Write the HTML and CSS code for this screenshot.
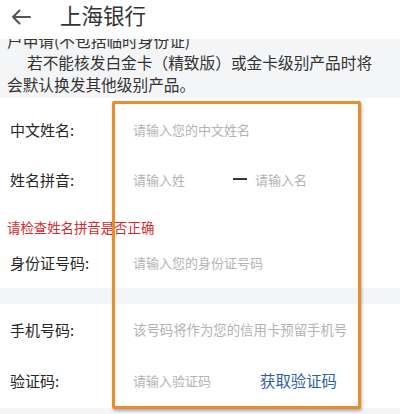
FILE: index.html
```html
<!DOCTYPE html>
<html lang="zh">
<head>
<meta charset="utf-8">
<link rel="stylesheet" href="styles.css">
</head>
<body>
<div class="page">
  <header class="header">
    <svg class="back" width="20" height="16" viewBox="0 0 20 16"><path d="M19 8H2M8.5 1.5L2 8l6.5 6.5" fill="none" stroke="#555" stroke-width="2" stroke-linecap="round" stroke-linejoin="round"/></svg>
    <span class="title">上海银行</span>
  </header>
  <div class="notice">
    <div class="notice-inner">
      <p class="line">户申请(不包括临时身份证)</p>
      <p class="line indent">若不能核发白金卡（精致版）或金卡级别产品时将</p>
      <p class="line">会默认换发其他级别产品。</p>
    </div>
  </div>
  <div class="form">
    <div class="row row-first">
      <span class="label">中文姓名:</span>
      <span class="ph">请输入您的中文姓名</span>
    </div>
    <div class="row">
      <span class="label">姓名拼音:</span>
      <span class="ph ph-last">请输入姓</span>
      <span class="dash"></span>
      <span class="ph">请输入名</span>
    </div>
    <div class="warn">请检查姓名拼音是否正确</div>
    <div class="row row-id">
      <span class="label">身份证号码:</span>
      <span class="ph">请输入您的身份证号码</span>
    </div>
    <div class="band"></div>
    <div class="row">
      <span class="label">手机号码:</span>
      <span class="ph ph-wide">该号码将作为您的信用卡预留手机号</span>
    </div>
    <div class="row row-last">
      <span class="label">验证码:</span>
      <span class="ph">请输入验证码</span>
      <span class="getcode">获取验证码</span>
    </div>
    <div class="highlight"></div>
  </div>
</div>
</body>
</html>
```
FILE: styles.css
```css
* { box-sizing: border-box; }
html, body { margin: 0; padding: 0; }
body {
  width: 400px;
  height: 414px;
  overflow: hidden;
  background: #f4f5f7;
  font-family: "Noto Sans CJK SC", "Noto Sans", sans-serif;
  color: #2b2b2b;
}
.page { position: relative; }
.header {
  height: 39px;
  background: #fff;
  display: flex;
  align-items: center;
  padding-left: 11px;
}
.back { margin-top: -6px; }
.title {
  margin-left: 29px;
  font-size: 21.5px;
  line-height: 24px;
  color: #333;
  margin-top: -9px;
}
.notice {
  height: 59px;
  overflow: hidden;
  background: #f4f5f7;
  padding-left: 7px;
}
.notice-inner { margin-top: -9px; }
.line {
  margin: 0;
  font-size: 15.7px;
  line-height: 22px;
  color: #333;
  white-space: nowrap;
}
.indent { text-indent: 20px; }
.form {
  position: relative;
  background: #fff;
  padding-top: 6px;
}
.row {
  height: 50px;
  display: flex;
  align-items: center;
  padding-left: 10px;
}
.row-id { height: 48px; padding-bottom: 3px; }
.row-last { height: 54px; padding-top: 0; padding-bottom: 2px; }
.label {
  width: 123px;
  font-size: 15px;
  color: #262626;
  flex: none;
}
.ph {
  font-size: 13px;
  color: #b3b3b3;
  white-space: nowrap;
}
.ph-wide { font-size: 13.4px; }
.ph-last { width: 100px; flex: none; }
.dash {
  width: 14px;
  height: 2px;
  background: #333;
  margin-right: 8px;
  flex: none;
}
.warn {
  height: 36px;
  padding-top: 14px;
  padding-left: 7px;
  font-size: 13.4px;
  line-height: 18px;
  color: #d42a2f;
}
.band {
  height: 16px;
  background: #f4f5f7;
}
.getcode {
  margin-left: 49px;
  font-size: 15.4px;
  color: #2c5ea5;
}
.highlight {
  position: absolute;
  left: 112px;
  top: 3px;
  width: 249px;
  height: 308px;
  border: 3px solid #ea8b2c;
  border-radius: 2px;
  box-shadow: 1px 2px 3px rgba(0,0,0,0.3);
}
```
